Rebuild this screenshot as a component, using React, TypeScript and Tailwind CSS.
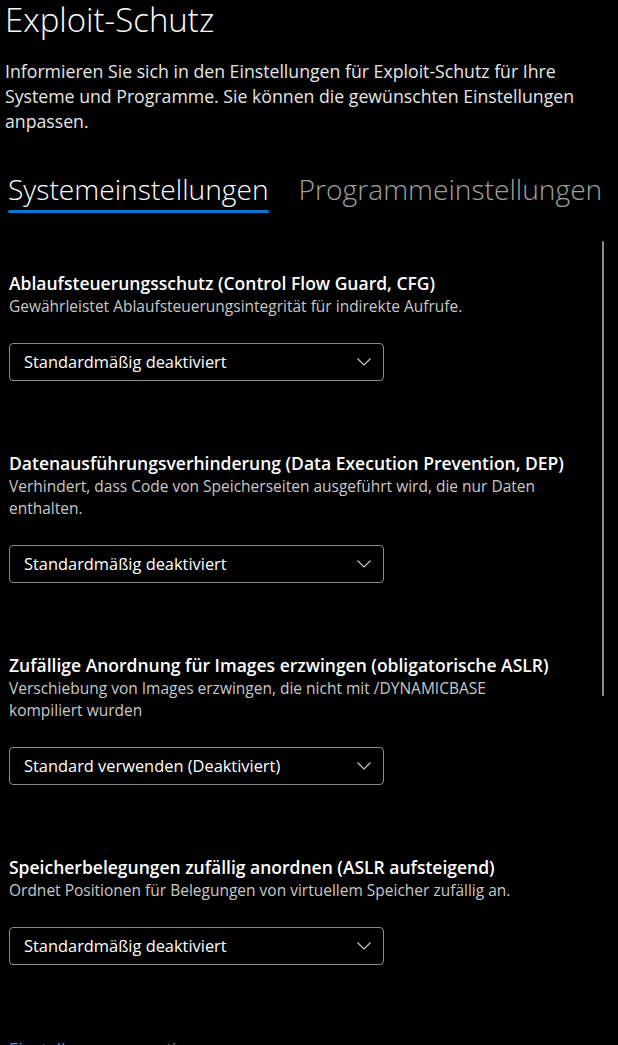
import React from "react";

const sections = [
  {
    title: "Ablaufsteuerungsschutz (Control Flow Guard, CFG)",
    desc: ["Gewährleistet Ablaufsteuerungsintegrität für indirekte Aufrufe."],
    value: "Standardmäßig deaktiviert",
  },
  {
    title: "Datenausführungsverhinderung (Data Execution Prevention, DEP)",
    desc: ["Verhindert, dass Code von Speicherseiten ausgeführt wird, die nur Daten", "enthalten."],
    value: "Standardmäßig deaktiviert",
  },
  {
    title: "Zufällige Anordnung für Images erzwingen (obligatorische ASLR)",
    desc: ["Verschiebung von Images erzwingen, die nicht mit /DYNAMICBASE", "kompiliert wurden"],
    value: "Standard verwenden (Deaktiviert)",
  },
  {
    title: "Speicherbelegungen zufällig anordnen (ASLR aufsteigend)",
    desc: ["Ordnet Positionen für Belegungen von virtuellem Speicher zufällig an."],
    value: "Standardmäßig deaktiviert",
  },
];

function Chevron() {
  return (
    <svg width="16" height="10" viewBox="0 0 16 10" fill="none" className="text-[#cfcfcf]">
      <path d="M1.5 1.5 L8 8 L14.5 1.5" stroke="currentColor" strokeWidth="1.1" />
    </svg>
  );
}

function Dropdown({ value }: { value: string }) {
  return (
    <div className="w-[375px] h-[38px] rounded-[4px] border border-[#8a8a8a] flex items-center justify-between pl-[14px] pr-[11px]">
      <span className="text-[16.4px] text-white">{value}</span>
      <Chevron />
    </div>
  );
}

export default function App() {
  const font = { fontFamily: '"Open Sans", "Noto Sans", sans-serif' };
  return (
    <div className="w-[618px] h-[1045px] bg-black text-white overflow-hidden relative" style={font}>
      <div className="pl-[5px]">
        <h1 className="text-[33px] font-light leading-[40px]">Exploit-Schutz</h1>
        <p className="mt-[19px] text-[17.7px] leading-[25px] text-[#e6e6e6] w-[612px]">
          Informieren Sie sich in den Einstellungen für Exploit-Schutz für Ihre
          <br />
          Systeme und Programme. Sie können die gewünschten Einstellungen
          <br />
          anpassen.
        </p>
      </div>

      <div className="mt-[35px] flex items-start gap-[30px] pl-[8px]">
        <div className="flex flex-col">
          <span className="text-[28.2px] font-light leading-[40px]">Systemeinstellungen</span>
          <div className="mt-[1px] h-[3px] rounded-full bg-[#0078d4]" />
        </div>
        <span className="text-[28.2px] font-light leading-[40px] text-[#a0a0a0] whitespace-nowrap">Programmeinstellungen</span>
      </div>

      <div className="relative mt-[28px]">
        <div className="absolute right-[14px] top-0 w-[2px] h-[455px] bg-[#8c8c8c] rounded-full" />
        <div className="pl-[9px] pt-[30px] flex flex-col gap-[70px]">
          {sections.map((s) => (
            <div key={s.title} className="flex flex-col">
              <div className="text-[17.5px] font-semibold leading-[24px]">{s.title}</div>
              <div className="text-[15.5px] leading-[22px] text-[#c8c8c8]">
                {s.desc.map((d) => (
                  <div key={d}>{d}</div>
                ))}
              </div>
              <div className="mt-[26px]">
                <Dropdown value={s.value} />
              </div>
            </div>
          ))}
          <div className="mt-[2px] text-[17px] text-[#3b9ee8] leading-[24px]">Einstellungen exportieren</div>
        </div>
      </div>
    </div>
  );
}
